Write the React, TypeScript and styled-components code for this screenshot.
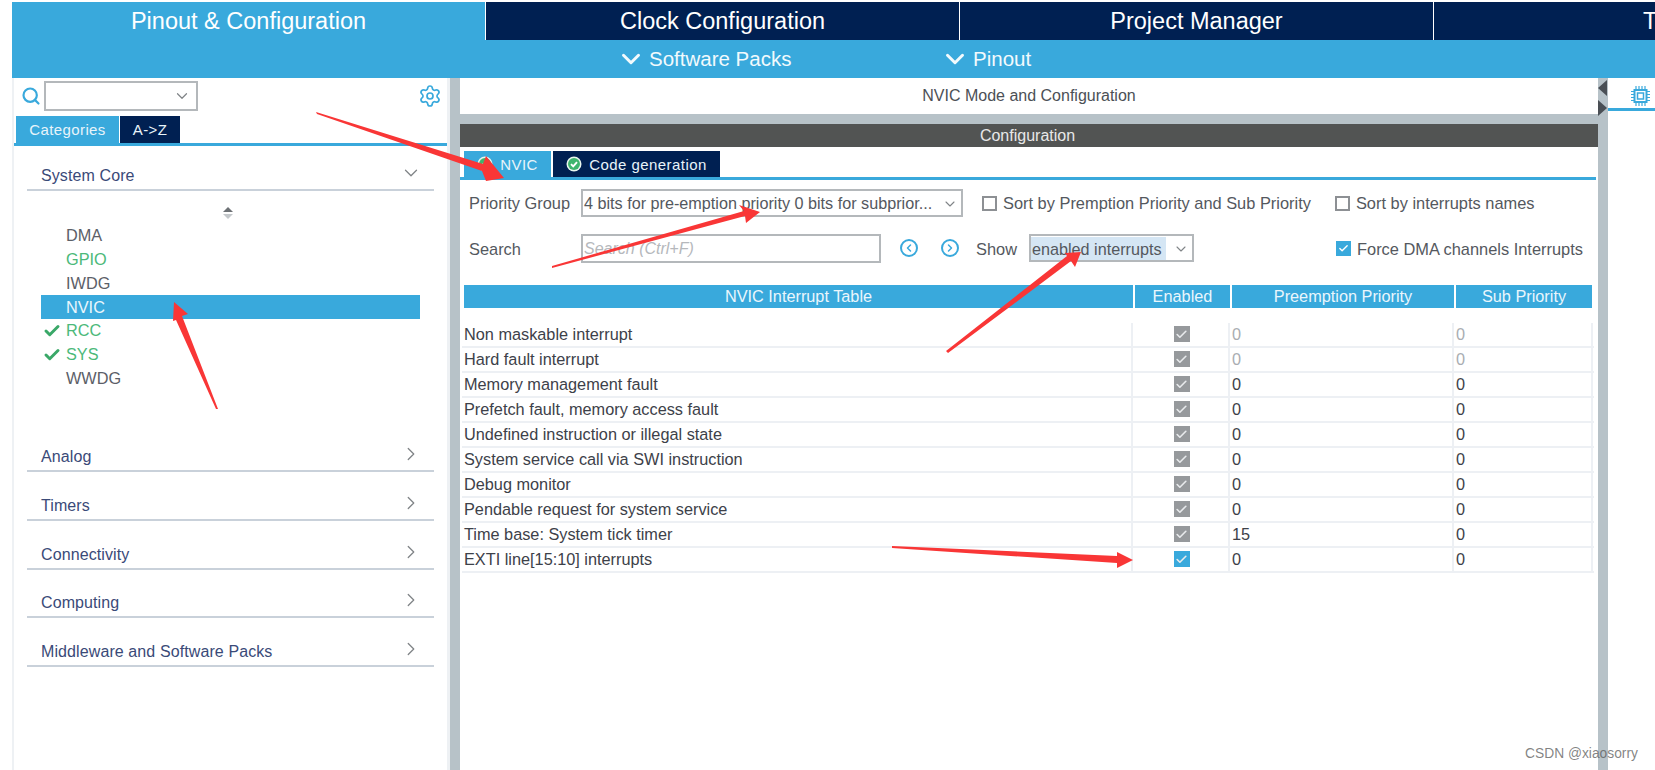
import React from 'react';
import styled, { createGlobalStyle } from 'styled-components';
import { ChevronDown, ChevronRight, ChevronLeft, Search, Settings, Check } from 'lucide-react';

const Global = createGlobalStyle`
  html, body { margin: 0; padding: 0; background: #fff; }
  * { box-sizing: border-box; }
  body { font-family: "Liberation Sans", Arial, sans-serif; }
`;
const Blue = '#39a9dc';
const Navy = '#002052';
const Gutter = '#b7c2c8';

const Page = styled.div`
  position: relative; width: 1655px; height: 770px; overflow: hidden;
  padding: 2px 0 0 12px; background: #fff; display: flex; flex-direction: column;
`;
const TopTabs = styled.div`display: flex; height: 38px; gap: 1px; overflow: hidden; flex: none;`;
const TopTab = styled.div<{ $active?: boolean }>`
  flex: 0 0 473px; display: flex; align-items: center; justify-content: center;
  font-size: 23.5px; color: #fff; white-space: nowrap; padding-top: 1px;
  background: ${p => (p.$active ? Blue : Navy)};
`;
const SubBar = styled.div`
  height: 38px; flex: none; background: ${Blue}; display: flex; align-items: center;
  padding-left: 604px; color: #f2fafd; font-size: 20.5px;
`;
const SubItem = styled.div<{ $w: number }>`
  width: ${p => p.$w}px; display: flex; align-items: center; gap: 3px;
`;
const Body = styled.div`flex: 1; display: flex; min-height: 0;`;
const Left = styled.div`
  width: 438px; flex: none; display: flex; flex-direction: column;
  border-left: 2px solid #eef1f4; border-right: 3px solid #eef1f4;
`;
const FindRow = styled.div`
  height: 38px; display: flex; align-items: center; padding: 0 5px 3px 7px; color: ${Blue};
`;
const Combo = styled.div`
  width: 154px; height: 30px; margin-left: 3px; border: 2px solid #b4b8bb; display: flex;
  align-items: center; justify-content: flex-end; padding-right: 5px; color: #808487;
`;
const GearSlot = styled.div`margin-left: auto; display: flex;`;
const SideTabs = styled.div`
  height: 30px; display: flex; gap: 1px; padding-left: 2px; border-bottom: 3px solid ${Blue}; flex: none;
`;
const SideTab = styled.div<{ $active?: boolean; $w: number }>`
  width: ${p => p.$w}px; display: flex; align-items: center; justify-content: center; color: #e8f4fa;
  font-size: 15px; letter-spacing: 0.4px; background: ${p => (p.$active ? Blue : Navy)};
`;
const Groups = styled.div`padding: 0 13px;`;
const GroupHead = styled.div<{ $top: number }>`
  margin-top: ${p => p.$top}px; height: 29px; display: flex; align-items: flex-start;
  justify-content: space-between; padding: 4px 12px 0 14px; border-bottom: 2px solid #c9d1da;
  color: #3a4a78; font-size: 16px; letter-spacing: 0.1px; line-height: 20px;
`;
const Arrow = styled.span`color: #808487; display: flex; margin-top: -4px;`;
const SortMark = styled.svg`display: block; margin: 15px 0 0 195px;`;
const Items = styled.div`margin-top: 4px;`;
const Item = styled.div<{ $green?: boolean; $sel?: boolean }>`
  height: 23.75px; width: 379px; margin-left: 14px; padding-left: 25px; display: flex; align-items: center;
  position: relative; font-size: 16.3px;
  color: ${p => (p.$sel ? '#eaf6fc' : p.$green ? '#4cb97a' : '#5c6068')};
  background: ${p => (p.$sel ? Blue : 'transparent')};
`;
const ItemCheck = styled.span`position: absolute; left: 2px; top: 3px; display: flex; color: #3aa868;`;
const VGutter = styled.div`width: 10px; flex: none; background: ${Gutter}; position: relative;`;
const Center = styled.div`width: 1138px; flex: none; display: flex; flex-direction: column;`;
const Title = styled.div`
  height: 36px; flex: none; display: flex; align-items: center; justify-content: center;
  font-size: 16px; color: #4c5056;
`;
const HGap = styled.div`height: 10px; flex: none; background: ${Gutter};`;
const ConfigBar = styled.div`
  height: 23px; flex: none; background: #525453; color: #e8e8e8; font-size: 16px;
  display: flex; align-items: center; justify-content: center; padding: 1px 3px 0 0;
`;
const CfgTabs = styled.div`
  height: 33px; flex: none; padding: 4px 0 0 4px; display: flex; gap: 2px; border-bottom: 3px solid ${Blue}; margin-right: 2px;
`;
const CfgTab = styled.div<{ $active?: boolean; $w: number }>`
  width: ${p => p.$w}px; display: flex; align-items: center; justify-content: center; gap: 7px; color: #e8f4fa;
  font-size: 15px; letter-spacing: 0.45px; background: ${p => (p.$active ? Blue : Navy)};
`;
const Form = styled.div`
  padding: 9px 0 0 9px; font-size: 16.4px; color: #54585e;
`;
const Line = styled.div<{ $top?: number }>`
  display: flex; align-items: center; height: 28px; margin-top: ${p => p.$top ?? 0}px;
`;
const Label = styled.span<{ $drop: number }>`width: 112px; flex: none; padding-top: ${p => p.$drop}px;`;
const Select = styled.div<{ $w: number }>`
  width: ${p => p.$w}px; height: 28px; flex: none; border: 2px solid #b4b8bb; display: flex; align-items: center;
  padding: 1px 3px 0 1px; justify-content: space-between; white-space: nowrap; color: #54585e; overflow: hidden;
  font-size: 16.2px;
`;
const ShowValue = styled.span`
  background: #d5e6f4; margin: -1px 0 -1px -1px; height: 24px; flex: none; width: 135px; padding-left: 1px; line-height: 24px;
`;
const Search2 = styled.div`
  width: 300px; height: 29px; flex: none; border: 2px solid #b4b8bb; padding: 1px 1px 0; display: flex; align-items: center;
  font-style: italic; color: #b5b8bc; font-size: 16px;
`;
const CheckLabel = styled.div<{ $left: number; $drop: number }>`
  margin-left: ${p => p.$left}px; display: flex; align-items: center; gap: 6px; white-space: nowrap;
  & > em { font-style: normal; padding-top: ${p => p.$drop}px; }
`;
const Box = styled.span<{ $on?: boolean }>`
  width: 15px; height: 15px; flex: none; border: 2px solid ${p => (p.$on ? Blue : '#8d9094')};
  background: ${p => (p.$on ? Blue : '#fff')}; color: #fff; display: flex; align-items: center; justify-content: center;
`;
const Nav = styled.span<{ $left: number }>`
  margin-left: ${p => p.$left}px; width: 18px; height: 18px; flex: none; border: 2.5px solid ${Blue}; border-radius: 50%;
  color: ${Blue}; display: flex; align-items: center; justify-content: center;
`;
const ShowLabel = styled.span`margin-left: 17px; width: 53px; flex: none; padding-top: 3px;`;
const Table = styled.div`margin: 23px 0 0 2px; width: 1132px;`;
const HeaderRow = styled.div`display: flex; gap: 2px; height: 23px; margin-left: 2px;`;
const HeadCell = styled.div<{ $w: number }>`
  width: ${p => p.$w}px; background: ${Blue}; color: #eaf6fc; font-size: 16.3px; display: flex; align-items: center; justify-content: center; flex: none;
`;
const Rows = styled.div`margin-top: 15px;`;
const Row = styled.div`display: flex; height: 25px; border-bottom: 2px solid #edf0f4;`;
const Cell = styled.div<{ $w: number; $center?: boolean; $muted?: boolean }>`
  width: ${p => p.$w}px; flex: none; display: flex; align-items: center; font-size: 16.3px; padding: 0 0 1px 2px;
  justify-content: ${p => (p.$center ? 'center' : 'flex-start')};
  color: ${p => (p.$muted ? '#a9adb2' : '#3d4149')};
  border-right: 2px solid #edf0f4;
  &:first-child { padding-left: 2px; }
`;
const RowBox = styled.span<{ $on?: boolean }>`
  width: 16px; height: 16px; background: ${p => (p.$on ? Blue : '#96999c')}; color: #e8eaec; display: flex; align-items: center; justify-content: center;
`;
const Right = styled.div`flex: 1; min-width: 0;`;
const RightTab = styled.div`
  height: 33px; border-bottom: 3px solid ${Blue}; padding: 8px 0 0 23px; color: ${Blue}; display: flex;
`;
const Grip = styled.svg`position: absolute; left: 0; top: 2px;`;
const Overlay = styled.svg`position: absolute; left: 0; top: 0; pointer-events: none;`;
const Watermark = styled.div`
  position: absolute; left: 1525px; top: 746px; font-size: 13.8px; color: rgba(90, 90, 90, 0.75); white-space: nowrap;
`;

const groups = ['Analog', 'Timers', 'Connectivity', 'Computing', 'Middleware and Software Packs'];
const rows: [string, string, string, boolean?, boolean?][] = [
  ['Non maskable interrupt', '0', '0', false, true],
  ['Hard fault interrupt', '0', '0', false, true],
  ['Memory management fault', '0', '0'],
  ['Prefetch fault, memory access fault', '0', '0'],
  ['Undefined instruction or illegal state', '0', '0'],
  ['System service call via SWI instruction', '0', '0'],
  ['Debug monitor', '0', '0'],
  ['Pendable request for system service', '0', '0'],
  ['Time base: System tick timer', '15', '0'],
  ['EXTI line[15:10] interrupts', '0', '0', true],
];

const TabCheck = () => (
  <svg width="16" height="16" viewBox="0 0 16 16">
    <circle cx="8" cy="8" r="7.5" fill="#eaf6ee" />
    <circle cx="8" cy="8" r="6" fill="#3fb56e" />
    <path d="M5 8.2l2.2 2.2L11 6.2" fill="none" stroke="#fff" strokeWidth="1.9" />
  </svg>
);

const Chip = () => (
  <svg width="19" height="20" viewBox="0 0 19 20" fill="none" stroke={Blue}>
    <rect x="3.5" y="4" width="12" height="12" strokeWidth="2" />
    <rect x="6.5" y="7" width="6" height="6" strokeWidth="1.5" />
    <path d="M5 0v3M8 0v3M11 0v3M14 0v3M5 17v3M8 17v3M11 17v3M14 17v3M0 5.5h3M0 8.5h3M0 11.5h3M0 14.5h3M16 5.5h3M16 8.5h3M16 11.5h3M16 14.5h3" strokeWidth="1.2" />
  </svg>
);

export default function App() {
  return (
    <Page>
      <Global />
      <TopTabs>
        <TopTab $active>Pinout &amp; Configuration</TopTab>
        <TopTab>Clock Configuration</TopTab>
        <TopTab>Project Manager</TopTab>
        <TopTab>Tools</TopTab>
      </TopTabs>
      <SubBar>
        <SubItem $w={324}><ChevronDown size={30} strokeWidth={2.4} />Software Packs</SubItem>
        <SubItem $w={100}><ChevronDown size={30} strokeWidth={2.4} />Pinout</SubItem>
      </SubBar>
      <Body>
        <Left>
          <FindRow>
            <Search size={20} strokeWidth={2.6} />
            <Combo><ChevronDown size={18} strokeWidth={1.6} /></Combo>
            <GearSlot><Settings size={24} strokeWidth={1.7} /></GearSlot>
          </FindRow>
          <SideTabs>
            <SideTab $active $w={103}>Categories</SideTab>
            <SideTab $w={60}>A-&gt;Z</SideTab>
          </SideTabs>
          <Groups>
            <GroupHead $top={16}>System Core<Arrow><ChevronDown size={22} strokeWidth={1.4} /></Arrow></GroupHead>
            <SortMark width="12" height="14" viewBox="0 0 12 14">
              <path d="M1 6l5-5 5 5z" fill="#6d7175" /><path d="M1 8l5 5 5-5z" fill="#c4c8cb" />
            </SortMark>
            <Items>
              <Item>DMA</Item>
              <Item $green>GPIO</Item>
              <Item>IWDG</Item>
              <Item $sel>NVIC</Item>
              <Item $green><ItemCheck><Check size={18} strokeWidth={4} /></ItemCheck>RCC</Item>
              <Item $green><ItemCheck><Check size={18} strokeWidth={4} /></ItemCheck>SYS</Item>
              <Item>WWDG</Item>
            </Items>
            {groups.map((g, i) => (
              <GroupHead key={g} $top={i === 0 ? 53 : 19.7}>
                {g}<Arrow><ChevronRight size={22} strokeWidth={1.4} /></Arrow>
              </GroupHead>
            ))}
          </Groups>
        </Left>
        <VGutter />
        <Center>
          <Title>NVIC Mode and Configuration</Title>
          <HGap />
          <ConfigBar>Configuration</ConfigBar>
          <CfgTabs>
            <CfgTab $active $w={87}><TabCheck />NVIC</CfgTab>
            <CfgTab $w={167}><TabCheck />Code generation</CfgTab>
          </CfgTabs>
          <Form>
            <Line>
              <Label $drop={1}>Priority Group</Label>
              <Select $w={382}>4 bits for pre-emption priority 0 bits for subprior...<ChevronDown size={16} strokeWidth={1.6} color="#808487" /></Select>
              <CheckLabel $left={19} $drop={1}><Box /><em>Sort by Premption Priority and Sub Priority</em></CheckLabel>
              <CheckLabel $left={24} $drop={1}><Box /><em>Sort by interrupts names</em></CheckLabel>
            </Line>
            <Line $top={17}>
              <Label $drop={3}>Search</Label>
              <Search2>Search (Ctrl+F)</Search2>
              <Nav $left={19}><ChevronLeft size={12} strokeWidth={3} /></Nav>
              <Nav $left={23}><ChevronRight size={12} strokeWidth={3} /></Nav>
              <ShowLabel>Show</ShowLabel>
              <Select $w={165}><ShowValue>enabled interrupts</ShowValue><ChevronDown size={16} strokeWidth={1.6} color="#808487" /></Select>
              <CheckLabel $left={142} $drop={3}><Box $on><Check size={13} strokeWidth={3} /></Box><em>Force DMA channels Interrupts</em></CheckLabel>
            </Line>
          </Form>
          <Table>
            <HeaderRow>
              <HeadCell $w={669}>NVIC Interrupt Table</HeadCell>
              <HeadCell $w={95}>Enabled</HeadCell>
              <HeadCell $w={222}>Preemption Priority</HeadCell>
              <HeadCell $w={136}>Sub Priority</HeadCell>
            </HeaderRow>
            <Rows>
              {rows.map(r => (
                <Row key={r[0]}>
                  <Cell $w={671}>{r[0]}</Cell>
                  <Cell $w={97} $center><RowBox $on={r[3]}><Check size={13} strokeWidth={3} /></RowBox></Cell>
                  <Cell $w={224} $muted={r[4]}>{r[1]}</Cell>
                  <Cell $w={139} $muted={r[4]}>{r[2]}</Cell>
                </Row>
              ))}
            </Rows>
          </Table>
        </Center>
        <VGutter>
          <Grip width="10" height="40" viewBox="0 0 10 40">
            <path d="M9 0v16L0 8z" fill="#4a4f55" /><path d="M0 20v16l9-8z" fill="#4a4f55" />
          </Grip>
        </VGutter>
        <Right>
          <RightTab><Chip /></RightTab>
        </Right>
      </Body>
      <Overlay width="1655" height="770" viewBox="0 0 1655 770">
        <g fill="#f93636">
          <polygon points="316,112 317,114 482,171 486,181 504,178 486,156 483,164" />
          <polygon points="552,266 552,268 745,216 746,223 760,212 739,205 744,211" />
          <polygon points="946,351 948,353 1071,261 1075,267 1081,252 1065,253 1067,256" />
          <polygon points="892,546 892,548 1117,563 1117,568 1133,560 1117,552 1117,556" />
          <polygon points="218,409 216,409 176,320 173,321 174,302 188,314 182,316" />
        </g>
      </Overlay>
      <Watermark>CSDN @xiaosorry</Watermark>
    </Page>
  );
}
